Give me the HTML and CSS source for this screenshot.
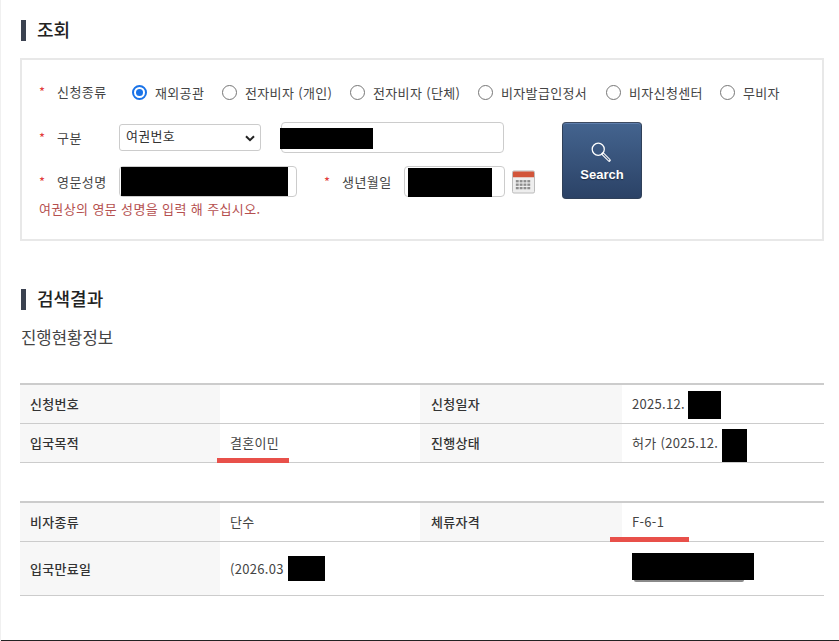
FILE: index.html
```html
<!DOCTYPE html>
<html lang="ko">
<head>
<meta charset="utf-8">
<title>조회</title>
<link rel="stylesheet" href="styles.css">
</head>
<body>
<main class="page">
  <h2 class="heading">조회</h2>
  <section class="panel">
    <div class="radio-row">
      <span class="star">*</span><span class="label">신청종류</span>
      <div class="radios">
        <label class="radio r1"><span class="dot on"></span>재외공관</label>
        <label class="radio r2"><span class="dot"></span>전자비자 (개인)</label>
        <label class="radio r3"><span class="dot"></span>전자비자 (단체)</label>
        <label class="radio r4"><span class="dot"></span>비자발급인정서</label>
        <label class="radio r5"><span class="dot"></span>비자신청센터</label>
        <label class="radio"><span class="dot"></span>무비자</label>
      </div>
    </div>
    <div class="form-body">
      <div class="fields">
        <div class="field-row row-type">
          <span class="star">*</span><span class="label">구분</span>
          <div class="select">여권번호
            <svg class="chev" width="10" height="7" viewBox="0 0 10 7"><path d="M1 1.2 5 5.2 9 1.2" fill="none" stroke="#222" stroke-width="2"/></svg>
          </div>
          <div class="input passport"><span class="mask mask-passport"></span></div>
        </div>
        <div class="field-row row-name">
          <span class="star">*</span><span class="label">영문성명</span>
          <div class="input name"><span class="mask mask-name"></span></div>
          <span class="star star-birth">*</span><span class="label label-birth">생년월일</span>
          <div class="input birth"><span class="mask mask-birth"></span></div>
          <svg class="cal" width="23" height="24" viewBox="0 0 24 24">
            <rect x="0.5" y="0.5" width="23" height="23" rx="1.5" fill="#eeeeee" stroke="#b8b8b8"/>
            <path d="M1 7V2a1 1 0 0 1 1-1h20a1 1 0 0 1 1 1v5z" fill="#d2553a"/>
            <g fill="#8d8d8d">
              <rect x="4" y="10" width="3" height="2.4"/><rect x="8" y="10" width="3" height="2.4"/><rect x="12" y="10" width="3" height="2.4"/><rect x="16" y="10" width="3" height="2.4"/>
              <rect x="4" y="13.6" width="3" height="2.4"/><rect x="8" y="13.6" width="3" height="2.4"/><rect x="12" y="13.6" width="3" height="2.4"/><rect x="16" y="13.6" width="3" height="2.4"/>
              <rect x="4" y="17.2" width="3" height="2.4"/><rect x="8" y="17.2" width="3" height="2.4"/><rect x="12" y="17.2" width="3" height="2.4"/><rect x="16" y="17.2" width="3" height="2.4"/>
            </g>
          </svg>
        </div>
        <p class="help">여권상의 영문 성명을 입력 해 주십시오.</p>
      </div>
      <button class="search" type="button">
        <svg class="glass" width="22" height="22" viewBox="0 0 24 24"><circle cx="9" cy="9" r="6.6" fill="none" stroke="#fff" stroke-width="1.4"/><path d="M14 14l7 7" stroke="#fff" stroke-width="3.4" stroke-linecap="round"/><path d="M14.6 14.6l6 6" stroke="#4d6488" stroke-width="1.2" stroke-linecap="round"/></svg>
        <span>Search</span>
      </button>
    </div>
  </section>

  <h2 class="heading heading-result">검색결과</h2>
  <h3 class="subheading">진행현황정보</h3>

  <table class="info first">
    <colgroup><col class="c1"><col class="c2"><col class="c3"><col></colgroup>
    <tr><th>신청번호</th><td></td><th class="th-right">신청일자</th><td>2025.12.<span class="mask m-date"></span></td></tr>
    <tr><th>입국목적</th><td class="marked">결혼이민<span class="redline red-a"></span></td><th class="th-right">진행상태</th><td>허가 (2025.12.<span class="mask m-status"></span></td></tr>
  </table>

  <table class="info second">
    <colgroup><col class="c1"><col class="c2"><col class="c3"><col></colgroup>
    <tr class="mid"><th>비자종류</th><td>단수</td><th class="th-right">체류자격</th><td class="marked">F-6-1<span class="redline red-b"></span></td></tr>
    <tr class="tall"><th>입국만료일</th><td>(2026.03<span class="mask m-expiry"></span></td><th class="blank"></th><td class="marked"><span class="mask m-button"></span></td></tr>
  </table>
</main>
<div class="footer-line"></div>
</body>
</html>
```
FILE: styles.css
```css
* { box-sizing: border-box; }
html, body { margin: 0; padding: 0; background: #fff; }
body {
  height: 641px;
  overflow: hidden;
  position: relative;
  font-family: "Noto Sans CJK KR", "Noto Sans", sans-serif;
  font-size: 13px;
  color: #444;
  border-left: 1px solid #f0f0f0;
}
.page { padding: 20px 15px 0 19px; }

.heading {
  margin: 0;
  height: 21px;
  padding-left: 11px;
  border-left: 5px solid #3b4250;
  margin-left: 1px;
  font-size: 18px;
  line-height: 19px;
  font-weight: 500;
  color: #222;
}

.panel {
  margin-top: 17px;
  height: 183px;
  border: 2px solid #e8e8e8;
  padding: 20px 0 0 17px;
}
.star { color: #e23b3b; width: 18px; font-size: 13px; line-height: 20px; flex: none; }
.label { flex: none; letter-spacing: .45px; color: #444; line-height: 20px; }

.radio-row { display: flex; align-items: center; height: 24px; }
.radio-row .label { width: 75px; }
.radios { display: flex; align-items: center; }
.radio { display: flex; align-items: center; gap: 8px; color: #444; letter-spacing: .35px; white-space: nowrap; }
.r1 { width: 90px; }
.r2 { width: 128px; }
.r3 { width: 128px; }
.r4 { width: 128px; }
.r5 { width: 114px; }
.dot {
  width: 15px; height: 15px; border-radius: 50%;
  border: 1.5px solid #767676; background: #fff; flex: none;
}
.dot.on { border: 2px solid #1a73e8; position: relative; }
.dot.on::after {
  content: ""; position: absolute; inset: 2px; border-radius: 50%; background: #1a73e8;
}

.form-body { display: flex; }
.fields { width: 523px; }
.field-row { display: flex; align-items: center; }
.row-type { margin-top: 18px; height: 31px; }
.row-type .label { width: 62px; }
.row-name { margin-top: 13px; height: 31px; }
.row-name .label { width: 62px; }
.select {
  width: 142px; height: 27px;
  border: 1px solid #ccc; border-radius: 3px;
  padding-left: 6px; line-height: 22px; letter-spacing: .3px; color: #333;
  position: relative; background: #fff;
}
.chev { position: absolute; right: 5px; top: 10px; }
.input { border: 1px solid #ccc; border-radius: 4px; height: 31px; background: #fff; position: relative; }
.passport { width: 223px; margin-left: 20px; }
.name { width: 178px; }
.birth { width: 101px; }
.star-birth { margin-left: 27px; }
.label-birth { width: 62px !important; }
.cal { margin-left: 7px; flex: none; }
.mask { background: #000; display: inline-block; }
.input .mask { position: absolute; }
.mask-passport { left: -2px; top: 5px; width: 93px; height: 21px; }
.mask-name { left: 1px; top: 0; width: 167px; height: 29px; }
.mask-birth { left: 3px; top: 1px; width: 84px; height: 29px; }
.help { margin: 3px 0 0; color: #b5504f; font-size: 13px; line-height: 18px; letter-spacing: .38px; }

.search {
  width: 80px; height: 77px;
  margin-top: 18px; margin-left: 0;
  border: 1px solid #2f4059; border-top-color: #3d4a60; border-radius: 4px;
  background: linear-gradient(#44648f, #2b4266);
  box-shadow: inset 0 1px 0 #5f7fae;
  color: #fff;
  font-family: "Liberation Sans", Arial, sans-serif;
  font-size: 13px; font-weight: 700;
  display: flex; flex-direction: column; align-items: center;
  padding: 18px 0 0;
  gap: 4px;
  text-shadow: 0 1px 1px rgba(0,0,0,.4);
}
.glass { margin-right: 3px; }

.heading-result { margin-top: 48px; }
.subheading { margin: 15px 0 0 1px; font-size: 16.7px; line-height: 24px; font-weight: 400; color: #444; }

.info {
  width: 804px; margin-left: 0; table-layout: fixed;
  border-collapse: collapse;
  border-top: 2px solid #ccc;
}
.first { margin-top: 34px; }
.second { margin-top: 38px; }
.c1 { width: 200px; }
.c2 { width: 200px; }
.c3 { width: 202px; }
.info th, .info td {
  height: 39px; padding: 0 10px;
  border-bottom: 1px solid #ccc;
  text-align: left; font-size: 13px; letter-spacing: .3px;
  vertical-align: middle; white-space: nowrap;
}
.info th { background: #f7f7f7; font-weight: 500; color: #333; }
.info th.th-right { padding-left: 11px; }
.info td { color: #444; font-weight: 400; position: relative; }
.info th.blank { background: #fff; }
.mid th, .mid td { height: 40px; }
.tall th, .tall td { height: 54px; }
.info td .mask { position: absolute; }
.m-date { left: 66px; top: 6px; width: 33px; height: 28px; }
.m-status { left: 100px; top: 5px; width: 25px; height: 33px; }
.m-expiry { left: 68px; top: 14px; width: 37px; height: 25px; }
.m-button { left: 10px; top: 11px; width: 122px; height: 27px; }
.m-button::after {
  content: ""; position: absolute; left: 2px; right: 10px; bottom: -2px; height: 2px;
  background: #8a8a8a; border-radius: 0 0 4px 4px;
}
.marked { overflow: visible; }
.redline { position: absolute; height: 5px; background: #e8504a; bottom: -1px; }
.red-a { left: -3px; width: 72px; }
.red-b { left: -12px; width: 79px; }

.footer-line { position: absolute; left: 0; right: 0; bottom: 0; height: 1px; background: #222; }
```
